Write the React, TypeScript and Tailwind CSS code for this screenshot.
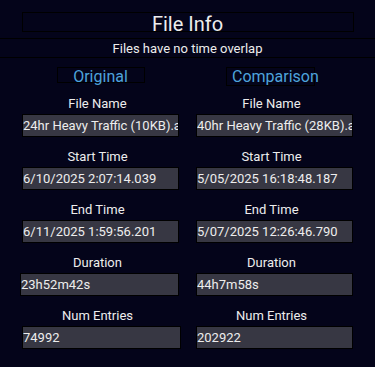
const original = [
  { label: "File Name", value: "24hr Heavy Traffic (10KB).asc" },
  { label: "Start Time", value: "6/10/2025 2:07:14.039" },
  { label: "End Time", value: "6/11/2025 1:59:56.201" },
  { label: "Duration", value: "23h52m42s", box: "-ml-[2px] w-[159px]" },
  { label: "Num Entries", value: "74992", box: "w-[159px]" },
];

const comparison = [
  { label: "File Name", value: "40hr Heavy Traffic (28KB).asc" },
  { label: "Start Time", value: "5/05/2025 16:18:48.187" },
  { label: "End Time", value: "5/07/2025 12:26:46.790" },
  { label: "Duration", value: "44h7m58s" },
  { label: "Num Entries", value: "202922" },
];

type Field = { label: string; value: string; box?: string };

function Column({ title, headerClass, fields }: { title: string; headerClass: string; fields: Field[] }) {
  return (
    <div className="flex w-[157px] flex-col">
      <div className="h-[29px]">
        <div
          className={`border border-black text-[16px] leading-[18px] whitespace-nowrap text-[#4ea3dc] ${headerClass}`}
        >
          {title}
        </div>
      </div>
      <div className="flex flex-col gap-[12px]">
        {fields.map((f) => (
          <div key={f.label} className="flex flex-col">
            <div className="h-[15px] pr-[6px] text-center text-[13px] leading-[15px]">{f.label}</div>
            <div
              className={`mt-[3px] h-[23px] overflow-hidden whitespace-nowrap border border-black bg-[#373743] text-[13px] leading-[21px] ${f.box ?? "w-[157px]"}`}
            >
              {f.value}
            </div>
          </div>
        ))}
      </div>
    </div>
  );
}

export default function App() {
  return (
    <div className="min-h-[367px] w-[375px] bg-[#04041a] pt-3 font-['Roboto',sans-serif] text-[#ededed]">
      <div className="mx-auto h-[20px] w-[332px] border border-black text-center text-[20px] leading-[23px]">
        File Info
      </div>
      <div className="mt-[6px] h-[20px] border-y border-black text-center text-[13px] leading-[19px]">
        Files have no time overlap
      </div>
      <div className="mt-[9px] flex gap-[17px] pl-[22px]">
        <Column title="Original" headerClass="mx-auto h-[16px] w-[88px] text-center" fields={original} />
        <Column title="Comparison" headerClass="ml-[30px] h-[19px] w-[89px] pl-[5px]" fields={comparison} />
      </div>
    </div>
  );
}
